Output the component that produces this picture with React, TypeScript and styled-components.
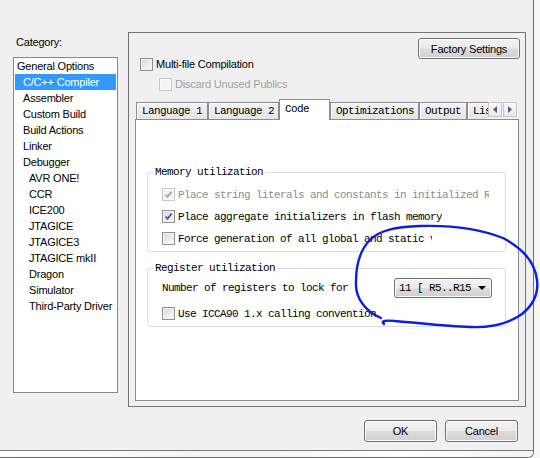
import React from "react";
import styled, { createGlobalStyle } from "styled-components";

const UI = `"Liberation Sans", Arial, sans-serif`;
const MONO = `"Liberation Mono", "Courier New", monospace`;

const GlobalStyle = createGlobalStyle`
  html, body {
    margin: 0;
    padding: 0;
    background: #f5f5f5;
  }
  body {
    width: 540px;
    height: 458px;
    overflow: hidden;
  }
`;

const Screen = styled.div`
  position: relative;
  width: 540px;
  height: 458px;
  background: #f6f6f6;
  font-family: ${UI};
  font-size: 11px;
  letter-spacing: -0.2px;
  color: #000;
`;

const Window = styled.div`
  width: 534px;
  height: 458px;
  box-sizing: border-box;
  border-right: 1px solid #6b6b6b;
  border-bottom: 1px solid #6b6b6b;
  border-bottom-right-radius: 6px;
  background: #f0f0f0;
  display: flex;
  flex-direction: column;
  overflow: hidden;
`;

const Body = styled.div`
  height: 451px;
  box-sizing: border-box;
  border-bottom: 1px solid #7a7a7a;
  padding-top: 32px;
  display: flex;
  flex-direction: column;
`;

const Edge = styled.div`
  flex: 1;
  background: linear-gradient(90deg, #ffffff 0%, #f3f3f3 45%, #ffffff 75%, #f3f3f3 100%);
`;

const MainRow = styled.div`
  display: flex;
  align-items: flex-start;
`;

const LeftCol = styled.div`
  margin-left: 13px;
  width: 105px;
  padding-top: 3px;
  display: flex;
  flex-direction: column;
`;

const Caption = styled.div`
  line-height: 14px;
  height: 14px;
  padding-left: 3px;
`;

const ListBox = styled.div`
  margin-top: 8px;
  height: 336px;
  box-sizing: border-box;
  border: 1px solid #828790;
  background: #fff;
`;

const ListItem = styled.div<{ $level: number; $selected?: boolean }>`
  height: 16px;
  line-height: 16px;
  margin: 0 1px;
  padding-left: ${(p) => 2 + p.$level * 6}px;
  white-space: nowrap;
  background: ${(p) => (p.$selected ? "#3399ff" : "transparent")};
  color: ${(p) => (p.$selected ? "#fff" : "#000")};
`;

const RightPanel = styled.div`
  margin-left: 10px;
  width: 398px;
  height: 375px;
  box-sizing: border-box;
  border: 1px solid #747474;
  display: flex;
  flex-direction: column;
`;

const TopArea = styled.div`
  display: flex;
  justify-content: space-between;
  align-items: flex-start;
  padding: 0 5px 0 11px;
`;

const OptionCol = styled.div`
  padding-top: 25px;
  display: flex;
  flex-direction: column;
  gap: 7px;
`;

const CheckRow = styled.div<{ $indent?: number }>`
  display: flex;
  align-items: center;
  gap: 3px;
  height: 13px;
  margin-left: ${(p) => p.$indent ?? 0}px;
`;

const Box = styled.span<{ $disabled?: boolean }>`
  width: 13px;
  height: 13px;
  box-sizing: border-box;
  flex: none;
  border: 1px solid ${(p) => (p.$disabled ? "#c7c7c7" : "#8e8f8f")};
  background: ${(p) =>
    p.$disabled ? "#f4f4f4" : "linear-gradient(135deg, #d3d5d8 0%, #eeeeee 60%, #fbfbfb 100%)"};
  box-shadow: inset 0 0 0 1px ${(p) => (p.$disabled ? "#f7f7f7" : "#f4f4f4")};
  display: flex;
  align-items: center;
  justify-content: center;
`;

const UiText = styled.span<{ $muted?: boolean }>`
  font-family: ${UI};
  font-size: 11px;
  line-height: 13px;
  white-space: nowrap;
  color: ${(p) => (p.$muted ? "#a0a0a0" : "#000")};
`;

const MonoText = styled.span<{ $muted?: boolean; $clip?: number }>`
  font-family: ${MONO};
  font-size: 11px;
  letter-spacing: -0.6px;
  line-height: 14px;
  white-space: nowrap;
  overflow: hidden;
  color: ${(p) => (p.$muted ? "#8c8c8c" : "#000")};
  ${(p) => (p.$clip ? `width: ${p.$clip}px; flex: none;` : "")}
`;

const Button = styled.div<{ $w: number; $h?: number }>`
  width: ${(p) => p.$w}px;
  height: ${(p) => p.$h ?? 22}px;
  box-sizing: border-box;
  border: 1px solid #707070;
  border-radius: 3px;
  background: linear-gradient(#f2f2f2 0%, #ebebeb 48%, #dddddd 52%, #cfcfcf 100%);
  box-shadow: inset 0 0 0 1px #fbfbfb;
  display: flex;
  align-items: center;
  justify-content: center;
  font-family: ${UI};
  font-size: 11px;
  flex: none;
`;

const FactoryButton = styled(Button)`
  margin-top: 5px;
`;

const Tabs = styled.div`
  margin: 8px 6px 5px 6px;
  flex: 1;
  display: flex;
  flex-direction: column;
`;

const TabStrip = styled.div`
  display: flex;
  align-items: flex-end;
  height: 20px;
  padding-left: 1px;
`;

const Tab = styled.div<{ $w: number; $active?: boolean; $open?: boolean }>`
  width: ${(p) => p.$w}px;
  height: ${(p) => (p.$active ? 21 : 17)}px;
  margin-bottom: ${(p) => (p.$active ? -1 : 0)}px;
  position: relative;
  z-index: ${(p) => (p.$active ? 1 : 0)};
  box-sizing: border-box;
  border: 1px solid #898c95;
  border-bottom: none;
  ${(p) => (p.$open ? "border-right: none;" : "")}
  background: ${(p) => (p.$active ? "#fff" : "linear-gradient(#f3f3f3, #e5e5e5)")};
  box-shadow: ${(p) => (p.$active ? "none" : "inset 1px 1px 0 #fcfcfc")};
  padding-left: 5px;
  padding-top: ${(p) => (p.$active ? 2 : 1)}px;
  overflow: hidden;
  flex: none;
  font-family: ${MONO};
  font-size: 11px;
  letter-spacing: -0.6px;
  line-height: 14px;
  white-space: nowrap;
`;

const ScrollArrows = styled.div`
  display: flex;
  gap: 1px;
  margin-bottom: 2px;
`;

const ArrowButton = styled.div`
  width: 14px;
  height: 15px;
  box-sizing: border-box;
  border: 1px solid #c4c6cc;
  background: linear-gradient(#fafafa, #e8e8e8);
  display: flex;
  align-items: center;
  justify-content: center;
`;

const TabPanel = styled.div`
  flex: 1;
  box-sizing: border-box;
  border: 1px solid #898c95;
  background: #fff;
  padding: 0 12px 0 11px;
`;

const Group = styled.fieldset<{ $top: number }>`
  margin: ${(p) => p.$top}px 0 0 0;
  padding: 0;
  min-width: 0;
  border: 1px solid #d5dfe5;
  border-radius: 3px;
`;

const Legend = styled.legend`
  margin-left: 5px;
  padding: 0 2px;
  font-family: ${MONO};
  font-size: 11px;
  letter-spacing: -0.6px;
  line-height: 14px;
`;

const GroupBody = styled.div<{ $top: number }>`
  padding: ${(p) => p.$top}px 13px 6px 14px;
  display: flex;
  flex-direction: column;
  gap: 9px;
`;

const ComboRow = styled.div`
  display: flex;
  align-items: center;
  justify-content: space-between;
  height: 20px;
`;

const Combo = styled.div`
  width: 98px;
  height: 20px;
  box-sizing: border-box;
  border: 1px solid #707070;
  border-radius: 3px;
  background: linear-gradient(#f2f2f2 0%, #ebebeb 48%, #dddddd 52%, #cfcfcf 100%);
  box-shadow: inset 0 0 0 1px #fbfbfb;
  display: flex;
  align-items: center;
  padding-left: 4px;
`;

const ComboArrow = styled.span`
  margin-left: auto;
  margin-right: 5px;
  width: 0;
  height: 0;
  border-left: 4px solid transparent;
  border-right: 4px solid transparent;
  border-top: 4px solid #000;
`;

const ButtonRow = styled.div`
  display: flex;
  justify-content: flex-end;
  gap: 8px;
  padding-right: 15px;
  margin-top: 13px;
`;

const Ink = styled.svg`
  position: absolute;
  left: 0;
  top: 0;
  pointer-events: none;
`;

const categories: { label: string; level: number }[] = [
  { label: "General Options", level: 0 },
  { label: "C/C++ Compiler", level: 1 },
  { label: "Assembler", level: 1 },
  { label: "Custom Build", level: 1 },
  { label: "Build Actions", level: 1 },
  { label: "Linker", level: 1 },
  { label: "Debugger", level: 1 },
  { label: "AVR ONE!", level: 2 },
  { label: "CCR", level: 2 },
  { label: "ICE200", level: 2 },
  { label: "JTAGICE", level: 2 },
  { label: "JTAGICE3", level: 2 },
  { label: "JTAGICE mkII", level: 2 },
  { label: "Dragon", level: 2 },
  { label: "Simulator", level: 2 },
  { label: "Third-Party Driver", level: 2 },
];

const tabs = [
  { label: "Language 1", w: 72 },
  { label: "Language 2", w: 71 },
  { label: "Code", w: 51, active: true },
  { label: "Optimizations", w: 89 },
  { label: "Output", w: 48 },
];

function Check({ checked, disabled }: { checked?: boolean; disabled?: boolean }) {
  return (
    <Box $disabled={disabled}>
      {checked && (
        <svg width="9" height="9" viewBox="0 0 9 9">
          <path
            d="M1.5 4.5 L3.5 6.8 L7.6 1.6"
            fill="none"
            stroke={disabled ? "#a6a6a6" : "#3e5a9a"}
            strokeWidth="1.7"
          />
        </svg>
      )}
    </Box>
  );
}

function Arrow({ dir }: { dir: "left" | "right" }) {
  return (
    <svg width="4" height="7" viewBox="0 0 4 7">
      <path d={dir === "left" ? "M4 0 L0 3.5 L4 7 Z" : "M0 0 L4 3.5 L0 7 Z"} fill="#4d6185" />
    </svg>
  );
}

export default function App() {
  return (
    <Screen>
      <GlobalStyle />
      <Window>
        <Body>
          <MainRow>
            <LeftCol>
              <Caption>Category:</Caption>
              <ListBox>
                {categories.map((c) => (
                  <ListItem key={c.label} $level={c.level} $selected={c.label === "C/C++ Compiler"}>
                    {c.label}
                  </ListItem>
                ))}
              </ListBox>
            </LeftCol>

            <RightPanel>
              <TopArea>
                <OptionCol>
                  <CheckRow>
                    <Check />
                    <UiText>Multi-file Compilation</UiText>
                  </CheckRow>
                  <CheckRow $indent={19}>
                    <Check disabled />
                    <UiText $muted>Discard Unused Publics</UiText>
                  </CheckRow>
                </OptionCol>
                <FactoryButton $w={102} $h={21}>Factory Settings</FactoryButton>
              </TopArea>

              <Tabs>
                <TabStrip>
                  {tabs.map((t) => (
                    <Tab key={t.label} $w={t.w} $active={t.active}>
                      {t.label}
                    </Tab>
                  ))}
                  <Tab $w={21} $open>
                    List
                  </Tab>
                  <ScrollArrows>
                    <ArrowButton>
                      <Arrow dir="left" />
                    </ArrowButton>
                    <ArrowButton>
                      <Arrow dir="right" />
                    </ArrowButton>
                  </ScrollArrows>
                </TabStrip>

                <TabPanel>
                  <Group $top={45}>
                    <Legend>Memory utilization</Legend>
                    <GroupBody $top={9}>
                      <CheckRow>
                        <Check checked disabled />
                        <MonoText $muted $clip={311}>
                          Place string literals and constants in initialized RAM
                        </MonoText>
                      </CheckRow>
                      <CheckRow>
                        <Check checked />
                        <MonoText>Place aggregate initializers in flash memory</MonoText>
                      </CheckRow>
                      <CheckRow>
                        <Check />
                        <MonoText $clip={254}>Force generation of all global and static variables</MonoText>
                      </CheckRow>
                    </GroupBody>
                  </Group>

                  <Group $top={9}>
                    <Legend>Register utilization</Legend>
                    <GroupBody $top={3}>
                      <ComboRow>
                        <MonoText>Number of registers to lock for</MonoText>
                        <Combo>
                          <MonoText>11 [ R5..R15</MonoText>
                          <ComboArrow />
                        </Combo>
                      </ComboRow>
                      <CheckRow>
                        <Check />
                        <MonoText>Use ICCA90 1.x calling convention</MonoText>
                      </CheckRow>
                    </GroupBody>
                  </Group>
                </TabPanel>
              </Tabs>
            </RightPanel>
          </MainRow>

          <ButtonRow>
            <Button $w={73}>OK</Button>
            <Button $w={73}>Cancel</Button>
          </ButtonRow>
        </Body>
        <Edge />
      </Window>

      <Ink width="540" height="458" viewBox="0 0 540 458">
        <path
          d="M381 318 C366 312 355 298 356 282 C356 266 360 250 370 240 C380 230 395 227 420 226 C450 225 480 229 503 238 C522 248 535 262 537 280 C539 296 532 306 522 314 C508 324 490 328 470 327 C445 326 420 323 395 321 C386 320 380 321 384 324"
          fill="none"
          stroke="#0a1ee6"
          strokeWidth="2.4"
          strokeLinecap="round"
          strokeLinejoin="round"
        />
      </Ink>
    </Screen>
  );
}
